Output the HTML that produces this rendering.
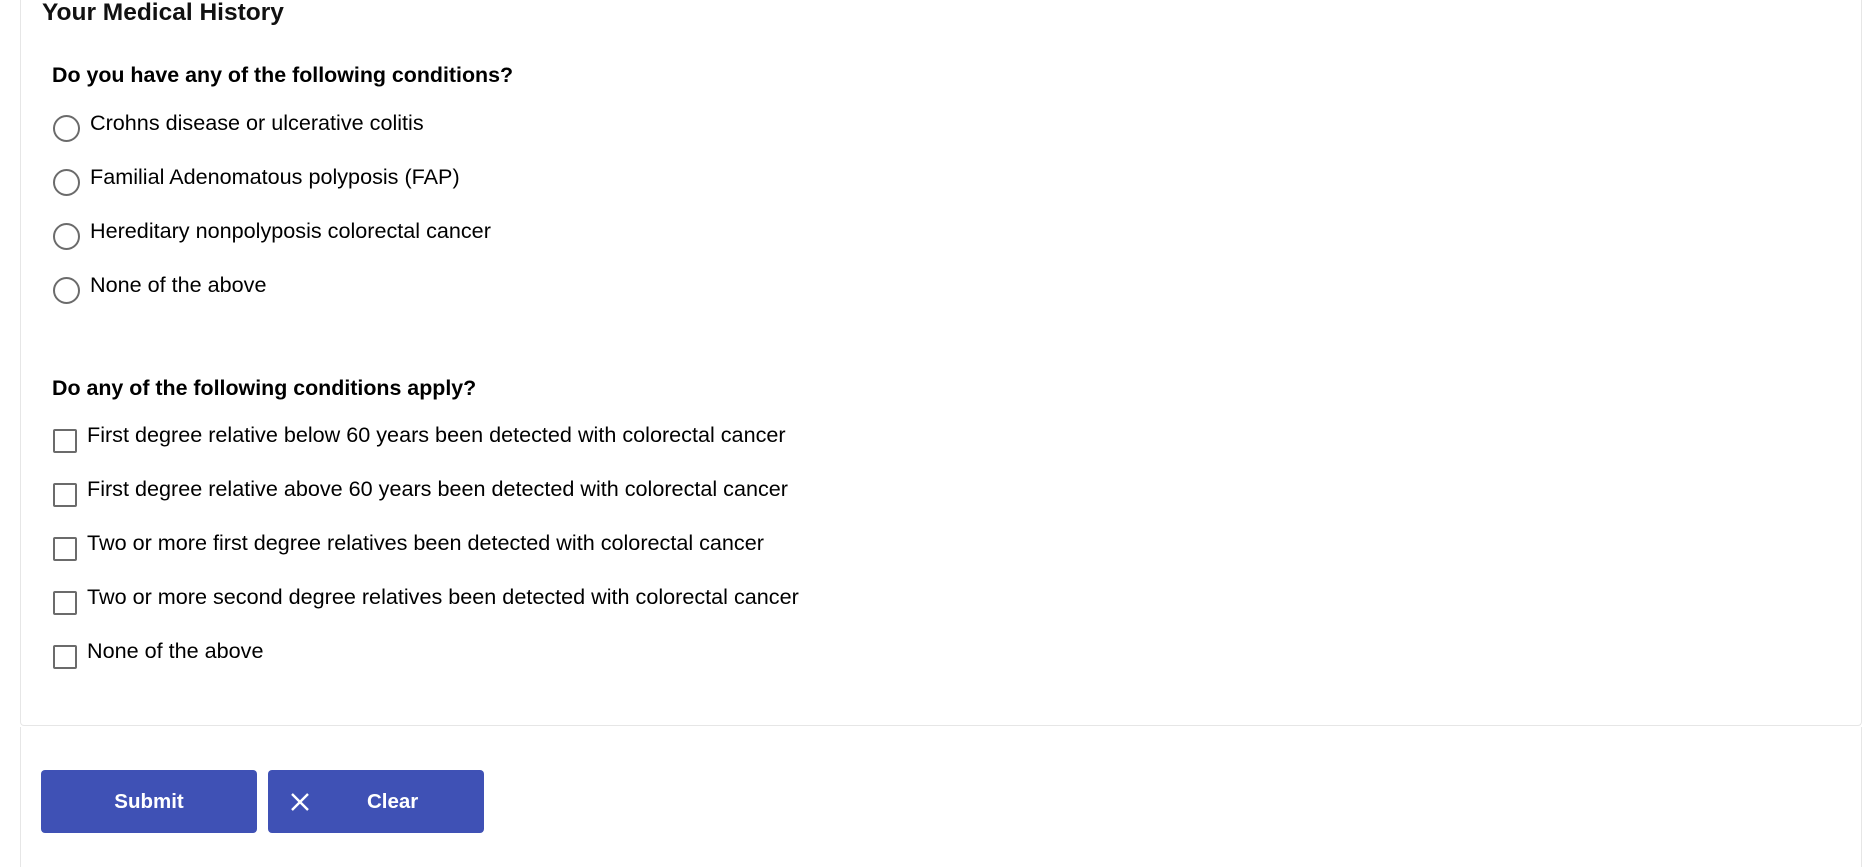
<!DOCTYPE html>
<html><head><meta charset="utf-8"><style>
html,body{margin:0;padding:0;width:1876px;height:851px;overflow:hidden;background:#fff;font-family:"Liberation Sans",Arial,sans-serif;color:#000}
.card{position:absolute;left:20px;top:-10px;width:1840px;height:735px;border:1px solid #e6e6e6;border-top:none;border-radius:0 0 4px 4px;background:#fff}
.card2{position:absolute;left:20px;top:727px;width:1840px;height:140px;border-left:1px solid #e6e6e6;border-right:1px solid #e6e6e6;background:#fff}
.abs{position:absolute;white-space:nowrap}
h1{position:absolute;left:42px;top:-2px;margin:0;font-size:24.5px;font-weight:bold;line-height:30px;color:#111}
.q{font-weight:bold;font-size:21.4px;left:52px}
.opt{font-size:21.6px;left:90px}
.radio{position:absolute;left:53px;width:23px;height:23px;border:2px solid #6b6b6b;border-radius:50%}
.cb{position:absolute;left:53px;width:20px;height:20px;border:2px solid #6b6b6b;border-radius:2px}
.btn{position:absolute;top:770px;height:63px;width:216px;background:#3f51b5;border-radius:4px;color:#fff;font-weight:bold;font-size:20.5px;line-height:63px}
</style></head><body>
<div class="card"></div>
<div class="card2"></div>
<h1>Your Medical History</h1>
<div class="abs q" style="top:63px">Do you have any of the following conditions?</div>
<div class="radio" style="top:115px"></div><div class="abs opt" style="top:110px">Crohns disease or ulcerative colitis</div>
<div class="radio" style="top:169px"></div><div class="abs opt" style="top:164px">Familial Adenomatous polyposis (FAP)</div>
<div class="radio" style="top:223px"></div><div class="abs opt" style="top:218px">Hereditary nonpolyposis colorectal cancer</div>
<div class="radio" style="top:277px"></div><div class="abs opt" style="top:272px">None of the above</div>
<div class="abs q" style="top:376px">Do any of the following conditions apply?</div>
<div class="cb" style="top:429px"></div><div class="abs opt" style="left:87px;top:422px">First degree relative below 60 years been detected with colorectal cancer</div>
<div class="cb" style="top:483px"></div><div class="abs opt" style="left:87px;top:476px">First degree relative above 60 years been detected with colorectal cancer</div>
<div class="cb" style="top:537px"></div><div class="abs opt" style="left:87px;top:530px">Two or more first degree relatives been detected with colorectal cancer</div>
<div class="cb" style="top:591px"></div><div class="abs opt" style="left:87px;top:584px">Two or more second degree relatives been detected with colorectal cancer</div>
<div class="cb" style="top:645px"></div><div class="abs opt" style="left:87px;top:638px">None of the above</div>
<div class="btn" style="left:41px;text-align:center">Submit</div>
<div class="btn" style="left:268px">
<svg style="position:absolute;left:22px;top:22px" width="20" height="20" viewBox="0 0 20 20"><path d="M2 2L18 18M18 2L2 18" stroke="#fff" stroke-width="2.4"/></svg>
<span style="position:absolute;left:99px">Clear</span></div>
</body></html>
